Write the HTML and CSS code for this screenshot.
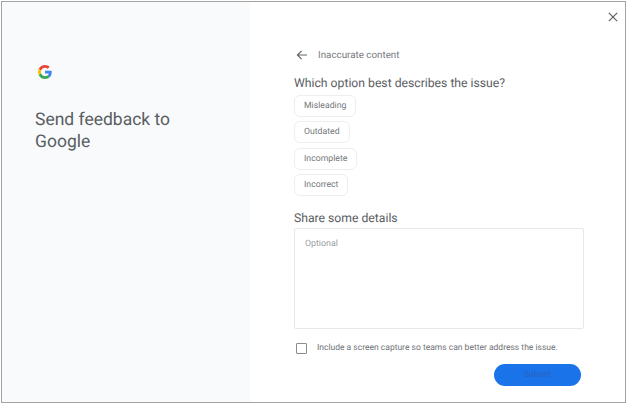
FILE: index.html
```html
<!DOCTYPE html>
<html lang="en">
<head>
<meta charset="utf-8">
<title>Send feedback to Google</title>
<link rel="stylesheet" href="styles.css">
</head>
<body>
<div class="window">
  <aside class="side">
    <svg class="logo" viewBox="0 0 48 48" width="14" height="14" aria-hidden="true">
      <path fill="#EA4335" d="M24 9.5c3.54 0 6.71 1.22 9.21 3.6l6.85-6.85C35.9 2.38 30.47 0 24 0 14.62 0 6.51 5.38 2.56 13.22l7.98 6.19C12.43 13.72 17.74 9.5 24 9.5z"/>
      <path fill="#4285F4" d="M46.98 24.55c0-1.57-.15-3.09-.38-4.55H24v9.02h12.94c-.58 2.96-2.26 5.48-4.78 7.18l7.73 6c4.51-4.18 7.09-10.36 7.09-17.65z"/>
      <path fill="#FBBC05" d="M10.53 28.59c-.48-1.45-.76-2.99-.76-4.59s.27-3.14.76-4.59l-7.98-6.19C.92 16.46 0 20.12 0 24c0 3.88.92 7.54 2.56 10.78l7.97-6.19z"/>
      <path fill="#34A853" d="M24 48c6.48 0 11.93-2.13 15.89-5.81l-7.73-6c-2.15 1.45-4.92 2.3-8.16 2.3-6.26 0-11.57-4.22-13.47-9.91l-7.98 6.19C6.51 42.62 14.62 48 24 48z"/>
    </svg>
    <h1 class="side-title">Send feedback to Google</h1>
  </aside>
  <main class="main">
    <button class="close" aria-label="Close">
      <svg viewBox="0 0 12 12" width="10" height="10" aria-hidden="true"><path d="M1 1l10 10M11 1L1 11" stroke="#5f6368" stroke-width="1.5" fill="none"/></svg>
    </button>
    <div class="crumb">
      <svg viewBox="0 0 14 12" width="12" height="10" aria-hidden="true"><path d="M13 6H2M6.5 1L1.5 6l5 5" stroke="#5f6368" stroke-width="1.4" fill="none"/></svg>
      <span>Inaccurate content</span>
    </div>
    <h2 class="heading">Which option best describes the issue?</h2>
    <div class="chips">
      <button class="chip">Misleading</button>
      <button class="chip">Outdated</button>
      <button class="chip">Incomplete</button>
      <button class="chip">Incorrect</button>
    </div>
    <h2 class="heading details">Share some details</h2>
    <div class="textbox">Optional</div>
    <label class="consent">
      <span class="check"></span>
      <span>Include a screen capture so teams can better address the issue.</span>
    </label>
    <div class="actions">
      <button class="submit">Submit</button>
    </div>
  </main>
</div>
</body>
</html>
```
FILE: styles.css
```css
* { box-sizing: border-box; }
html, body { margin: 0; padding: 0; background: #fff; }
body { width: 628px; height: 404px; padding: 1px 2px 1px 1px; font-family: Roboto, "Liberation Sans", sans-serif; overflow: hidden; text-rendering: geometricPrecision; }
.window { display: flex; width: 625px; height: 402px; border: 1px solid #a3a3a3; background: #fff; }
.side { width: 248px; flex: none; background: #f8fafc; padding: 63px 33px 0 33px; }
.logo { display: block; margin-left: 3px; }
.side-title { margin: 30px 0 0; font-size: 17.5px; line-height: 22px; font-weight: 400; color: #5a5d61; }
.main { position: relative; flex: 1; padding: 46px 0 0 44px; }
.close { position: absolute; top: 9px; right: 6px; width: 12px; height: 12px; padding: 0; border: 0; background: none; display: flex; align-items: center; justify-content: center; }
.crumb { display: flex; align-items: center; gap: 10px; height: 14px; font-size: 9.8px; color: #777a7e; margin-left: 2px; }
.heading { margin: 12px 0 0; font-size: 12.2px; line-height: 18px; font-weight: 400; color: #5a5d61; }
.chips { display: flex; flex-direction: column; align-items: flex-start; gap: 4.33px; margin-top: 3px; }
.chip { height: 22px; padding: 0 9px; border: 1px solid #eceef0; border-radius: 6px; background: #fff; font: 400 8.7px Roboto, sans-serif; text-rendering: geometricPrecision; color: #74777b; }
.details { margin-top: 13px; }
.textbox { width: 290px; height: 101px; margin-top: 1px; padding: 10px 10px; border: 1px solid #e6e8ea; border-radius: 2px; font-size: 8.8px; color: #9a9da0; }
.consent { display: flex; align-items: center; gap: 10px; margin: 14px 0 0 2px; font-size: 8.5px; color: #6f7276; }
.check { width: 11px; height: 11px; border: 1px solid #8a8d90; border-radius: 1px; }
.actions { display: flex; justify-content: flex-end; width: 287px; margin-top: 10px; }
.submit { width: 87px; height: 22px; border: 0; border-radius: 11px; background: #1a73e8; font: 400 8.8px Roboto, sans-serif; text-rendering: geometricPrecision; color: #2a62bf; }
```
